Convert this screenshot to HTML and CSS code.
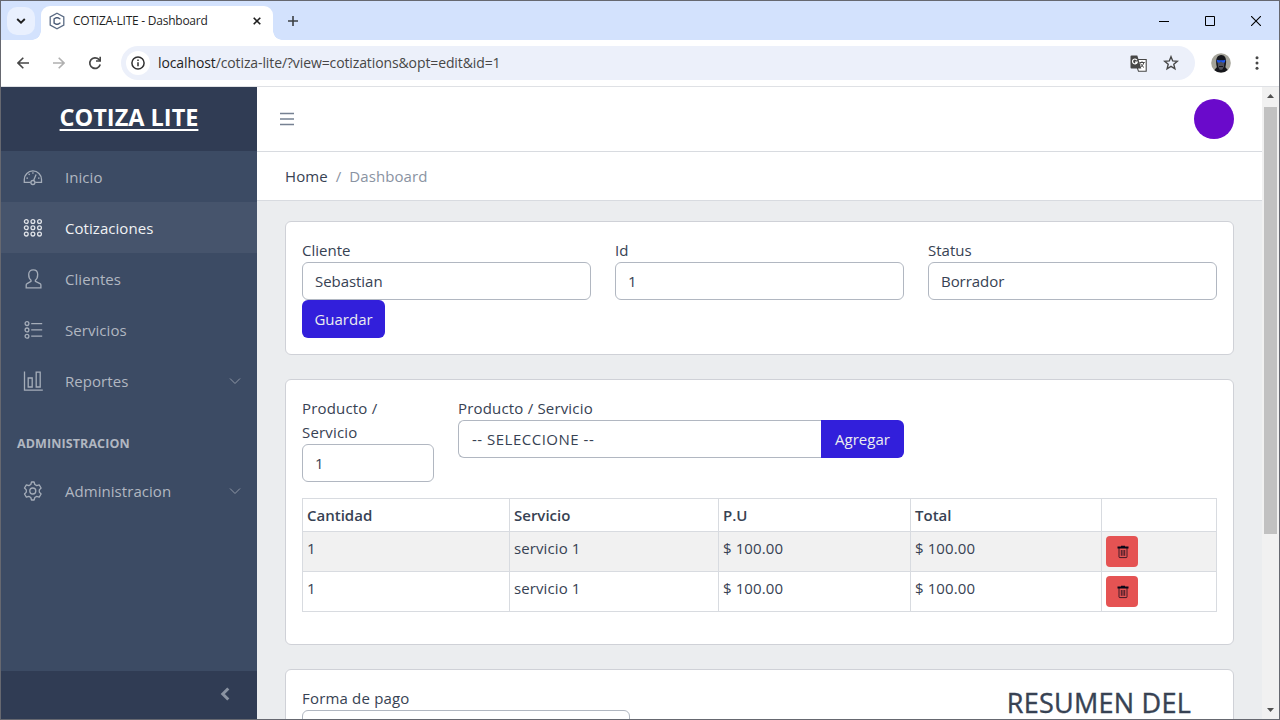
FILE: index.html
```html
<!DOCTYPE html>
<html lang="es">
<head>
<meta charset="utf-8">
<title>COTIZA-LITE - Dashboard</title>
<link rel="stylesheet" href="styles.css">
</head>
<body>
<div class="window">
  <div class="tabstrip">
    <div class="tab-search"><svg width="10" height="6" viewBox="0 0 10 6"><path d="M1.200 1 5 4.600 8.800 1" fill="none" stroke="#1f1f1f" stroke-width="1.900"/></svg></div>
    <div class="tab">
      <svg class="favicon" width="16" height="18" viewBox="0 0 16 18"><path d="M8 1.200 14.800 5v8L8 16.800 1.200 13V5z" fill="none" stroke="#5a6b84" stroke-width="1.300"/><path d="M10.900 7.300V6.900L8.900 5.700H7.200L5.100 6.900v4.200l2.100 1.200h1.700l2-1.200v-.5" fill="none" stroke="#4c5d78" stroke-width="1.400"/></svg>
      <span class="tab-title">COTIZA-LITE - Dashboard</span>
      <svg class="tab-close" width="8" height="8" viewBox="0 0 8 8"><path d="m.7.7 6.600 6.600M7.300.7.7 7.300" stroke="#1f1f1f" stroke-width="1.600"/></svg>
    </div>
    <svg class="new-tab" width="12" height="12" viewBox="0 0 12 12"><path d="M6 1v10M1 6h10" stroke="#3c4043" stroke-width="1.600"/></svg>
    <div class="controls">
      <svg width="10" height="10" viewBox="0 0 10 10"><path d="M0 5.500h10" stroke="#000"/></svg>
      <svg width="10" height="10" viewBox="0 0 10 10"><path d="M.5.5h9v9h-9z" fill="none" stroke="#000"/></svg>
      <svg width="10" height="10" viewBox="0 0 10 10"><path d="m0 0 10 10M10 0 0 10" stroke="#000" stroke-width="1.100"/></svg>
    </div>
  </div>
  <div class="toolbar">
    <svg class="nav-icon" width="12" height="12" viewBox="0 0 12 12"><path d="M12 6H1.200M6.300.8 1 6l5.300 5.200" fill="none" stroke="#474747" stroke-width="1.600"/></svg>
    <svg class="nav-icon" width="12" height="12" viewBox="0 0 12 12"><path d="M0 6h10.800M5.700.8 11 6l-5.300 5.200" fill="none" stroke="#b0b0b0" stroke-width="1.600"/></svg>
    <svg class="nav-icon" width="14" height="14" viewBox="0 0 14 14"><path d="M12.200 8.500A5.300 5.300 0 1 1 10.900 3.400L12.200 4.700" fill="none" stroke="#474747" stroke-width="1.700"/><path d="M13 .8v5H8V4.200h3.400V.8z" fill="#474747"/></svg>
    <div class="omnibox">
      <div class="site-info"><svg width="14" height="14" viewBox="0 0 14 14"><circle cx="7" cy="7" r="6.100" fill="none" stroke="#303030" stroke-width="1.500"/><path d="M6.250 6.200h1.500v4h-1.500zM6.250 3.600h1.500v1.500h-1.500z" fill="#303030"/></svg></div>
      <span class="url"><span class="host">localhost</span>/cotiza-lite/?view=cotizations&amp;opt=edit&amp;id=1</span>
      <svg class="translate" width="17" height="17" viewBox="0 0 17 17"><path d="M7.500 4.500h8.700v11.800H8.500l-1-3z" fill="#fff" stroke="#474747" stroke-width="1.100"/><path d="M1.500.5h5.800l4 13H1.500A1 1 0 0 1 .5 12.500v-11a1 1 0 0 1 1-1z" fill="#474747"/><path d="M7 5.200A2.400 2.400 0 1 0 7.200 7.200H5" fill="none" stroke="#fff" stroke-width="1.200"/><path d="M9.500 7.500h5.200M12 6.300v1.200M13.800 7.700c-.6 2-1.800 3.500-3 4.300M10.500 8.500c.7 1.500 2 3 3.500 4" fill="none" stroke="#474747"/></svg>
      <svg class="star" width="16" height="16" viewBox="0 0 16 16"><path d="m8 1.700 1.700 4.200 4.600.4-3.500 3 1.100 4.500L8 11.400l-3.900 2.400 1.100-4.500-3.500-3 4.600-.4z" fill="none" stroke="#474747" stroke-width="1.400"/></svg>
    </div>
    <svg class="profile" width="20" height="20" viewBox="0 0 20 20"><circle cx="10" cy="10" r="9.800" fill="#a5a49a"/><path d="M3.500 17.200C4.500 15 5.500 15.500 5.800 14 4.600 9 4.500 2.200 10.200 2 15.800 2.200 15.700 9 14.400 14c.6 1.500 1.500 1.500 2.200 3a9.800 9.800 0 0 1-13.100.2z" fill="#15161b"/><path d="M6.500 8.700h7l-.6 5-1.700 3H8.700l-1.600-3z" fill="#50515b"/><path d="M5.700 6.700c3 .8 6 .8 8.800 0l-.7 2.800h-2.500L10 8.500l-1.300 1H6.400z" fill="#1c55ee"/><path d="M8 13.500h4" stroke="#15161b"/></svg>
    <svg class="kebab" width="4" height="14" viewBox="0 0 4 14"><circle cx="2" cy="1.700" r="1.500" fill="#474747"/><circle cx="2" cy="7" r="1.500" fill="#474747"/><circle cx="2" cy="12.300" r="1.500" fill="#474747"/></svg>
  </div>

  <div class="viewport">
    <aside class="sidebar">
      <div class="brand"><a class="brand-name">COTIZA LITE</a></div>
      <nav class="nav">
        <a class="item"><svg class="icon" viewBox="0 0 20 20"><path d="M7.600 15.300H1.300V12.500a8.600 8.600 0 0 1 17.200 0V15.300h-6.300"/><circle cx="9.900" cy="15.500" r="2"/><path d="m10.600 13.400 2.500-6M3.400 11.200h1.600M15 11.200h1.500M5.600 6.800l1.100 1.100M9.900 5.200v1.500"/></svg><span>Inicio</span></a>
        <a class="item active"><svg class="icon" viewBox="0 0 20 20"><circle cx="3.300" cy="3.500" r="1.900"/><circle cx="9.900" cy="3.500" r="1.900"/><circle cx="16.500" cy="3.500" r="1.900"/><circle cx="3.300" cy="9.800" r="1.900"/><circle cx="9.900" cy="9.800" r="1.900"/><circle cx="16.500" cy="9.800" r="1.900"/><circle cx="3.300" cy="16.100" r="1.900"/><circle cx="9.900" cy="16.100" r="1.900"/><circle cx="16.500" cy="16.100" r="1.900"/></svg><span>Cotizaciones</span></a>
        <a class="item"><svg class="icon" viewBox="0 0 20 20"><path d="M8 11.200C6.300 10 5.700 8.200 5.700 5.600c0-3 1.700-4.700 4.500-4.700s4.500 1.700 4.500 4.700c0 2.600-.6 4.400-2.300 5.600v1.200l4.600 2.200c.6.300.9.800.9 1.500v2.800H3.200v-2.800c0-.7.300-1.200.9-1.500L8 12.400z"/></svg><span>Clientes</span></a>
        <a class="item"><svg class="icon" viewBox="0 0 20 20"><circle cx="4" cy="3.600" r="1.900"/><circle cx="4" cy="9.900" r="1.900"/><circle cx="4" cy="16.200" r="1.900"/><path d="M8.200 3.600h11M8.200 9.900h11M8.200 16.200h11"/></svg><span>Servicios</span></a>
        <a class="item"><svg class="icon" viewBox="0 0 20 20"><path d="M1.500.5v18.700h18.300M5.200 7h4v9h-4zM13.200 1.200h4V16h-4z"/></svg><span>Reportes</span><svg class="chevron" viewBox="0 0 12 8"><path d="m1 1.500 5 5 5-5"/></svg></a>
        <div class="nav-title">ADMINISTRACION</div>
        <a class="item"><svg class="icon" viewBox="0 0 20 20"><path d="M8.500 1h2.600l.7 2.500 1.900 1.100 2.500-.7 1.900 3.100-1.800 1.900v2.200l1.800 1.900-1.900 3.100-2.500-.7-1.900 1.100-.7 2.500H8.500l-.7-2.500-1.900-1.100-2.500.7L1.500 13l1.800-1.900V8.900L1.500 7l1.900-3.100 2.500.7 1.900-1.100z" stroke-linejoin="round"/><circle cx="9.800" cy="10" r="3"/></svg><span>Administracion</span><svg class="chevron" viewBox="0 0 12 8"><path d="m1 1.500 5 5 5-5"/></svg></a>
      </nav>
      <div class="toggler"><svg width="10" height="14" viewBox="0 0 10 14"><path d="M8.300 1.500 2.800 7l5.500 5.500" fill="none" stroke="#8a93a2" stroke-width="3"/></svg></div>
    </aside>

    <main class="main">
      <header class="header">
        <svg class="burger" width="14" height="14" viewBox="0 0 14 14"><path d="M0 1.500h14M0 7h14M0 12.500h14"/></svg>
        <div class="avatar"></div>
      </header>
      <div class="breadcrumb"><span>Home</span><span class="muted">/</span><span class="muted">Dashboard</span></div>
      <div class="content">
        <section class="card">
          <div class="row">
            <div class="third"><label>Cliente</label><div class="control">Sebastian</div></div>
            <div class="third"><label>Id</label><div class="control">1</div></div>
            <div class="third"><label>Status</label><div class="control">Borrador</div></div>
          </div>
          <button class="btn" type="button">Guardar</button>
        </section>

        <section class="card">
          <div class="row add-row">
            <div class="qty"><label>Producto /<br>Servicio</label><div class="control">1</div></div>
            <div class="product"><label>Producto / Servicio</label>
              <div class="group"><div class="control select">-- SELECCIONE --</div><button class="btn" type="button">Agregar</button></div>
            </div>
          </div>
          <table class="table">
            <colgroup><col class="c1"><col class="c2"><col class="c3"><col class="c4"><col class="c5"></colgroup>
            <thead><tr><th>Cantidad</th><th>Servicio</th><th>P.U</th><th>Total</th><th></th></tr></thead>
            <tbody>
              <tr class="striped"><td>1</td><td>servicio 1</td><td>$ 100.00</td><td>$ 100.00</td><td><button class="delete" type="button"><svg width="12" height="14" viewBox="0 0 12 14"><path d="M.5 1.500h3.500V.7h4v.8h3.500v2H.5z" fill="#080818"/><path d="M2 3v8.800q0 .8.800.8h6.400q.8 0 .8-.8V3M4.300 5v5.800M6 5v5.800M7.700 5v5.800" fill="none" stroke="#080818" stroke-width=".75"/></svg></button></td></tr>
              <tr><td>1</td><td>servicio 1</td><td>$ 100.00</td><td>$ 100.00</td><td><button class="delete" type="button"><svg width="12" height="14" viewBox="0 0 12 14"><path d="M.5 1.500h3.500V.7h4v.8h3.500v2H.5z" fill="#080818"/><path d="M2 3v8.800q0 .8.800.8h6.400q.8 0 .8-.8V3M4.300 5v5.800M6 5v5.800M7.700 5v5.800" fill="none" stroke="#080818" stroke-width=".75"/></svg></button></td></tr>
            </tbody>
          </table>
        </section>

        <section class="card">
          <div class="row summary">
            <div class="payment"><label>Forma de pago</label><div class="control"></div></div>
            <h3 class="summary-title">RESUMEN DEL</h3>
          </div>
        </section>
      </div>
    </main>

    <div class="scrollbar">
      <svg width="17" height="17" viewBox="0 0 17 17"><path d="M5 11h7L8.500 7z" fill="#505050"/></svg>
      <div class="thumb"></div>
      <svg class="down" width="17" height="17" viewBox="0 0 17 17"><path d="M5 6h7l-3.500 4z" fill="#505050"/></svg>
    </div>
  </div>
</div>
</body>
</html>
```

FILE: styles.css
```css
* { box-sizing: border-box; }
body {
  margin: 0;
  width: 1280px;
  height: 720px;
  overflow: hidden;
  font-family: "Open Sans", "Noto Sans", sans-serif;
  font-size: 15px;
  line-height: 24px;
  color: #374253;
}
svg { display: block; flex: none; }
.window {
  display: flex;
  flex-direction: column;
  height: 720px;
  border: 1px solid #666870;
  background: #fff;
}

/* Browser chrome */
.tabstrip { display: flex; align-items: center; height: 39px; flex: none; background: #d3e2fd; }
.tab-search {
  display: flex; align-items: center; justify-content: center;
  width: 28px; height: 28px; margin-left: 6px;
  border-radius: 10px; background: #e9f0fe;
}
.tab {
  position: relative;
  display: flex; align-items: center; align-self: flex-end;
  width: 232px; height: 34px; margin-left: 6px; padding: 0 12px 4px 8px;
  border-radius: 9px 9px 0 0; background: #fff;
}
.tab::before, .tab::after {
  content: ""; position: absolute; bottom: 0; width: 9px; height: 9px;
}
.tab::before { left: -9px; background: radial-gradient(circle at 0 0, transparent 8.500px, #fff 9px); }
.tab::after { right: -9px; background: radial-gradient(circle at 100% 0, transparent 8.500px, #fff 9px); }
.tab-title { margin-left: 8px; font-size: 12px; letter-spacing: -0.240px; color: #1f1f1f; white-space: nowrap; }
.tab-close { margin-left: auto; }
.new-tab { margin-left: 14px; }
.controls { display: flex; gap: 36px; margin-left: auto; margin-right: 18px; }
.toolbar {
  display: flex; align-items: center; flex: none;
  height: 47px; border-bottom: 1px solid #dfe1e5; background: #fff;
}
.nav-icon { margin-left: 24px; }
.nav-icon:first-child { margin-left: 16px; }
.toolbar .nav-icon:nth-child(3) { margin-left: 23px; }
.omnibox {
  display: flex; align-items: center;
  width: 1074px; height: 34px; margin-left: 19px; padding: 0 16px 0 5px;
  border-radius: 17px; background: #ecf0fa;
}
.site-info {
  display: flex; align-items: center; justify-content: center;
  width: 24px; height: 24px; border-radius: 50%; background: #fff;
}
.url { margin-left: 8px; font-size: 14px; letter-spacing: -0.110px; color: #474747; white-space: nowrap; }
.host { color: #1f1f1f; }
.translate { margin-left: auto; }
.star { margin-left: 16px; }
.profile { margin-left: 16px; }
.kebab { margin-left: 24px; }

/* Page */
.viewport { display: flex; flex: 1; min-height: 0; }
.sidebar { display: flex; flex-direction: column; width: 256px; flex: none; background: #3c4b64; }
.brand { display: flex; justify-content: center; height: 64px; padding-top: 15px; background: #303c54; }
.brand-name {
  font-size: 23.500px; line-height: 30px; font-weight: 700; letter-spacing: 0;
  color: #fff; text-decoration: underline; text-decoration-thickness: 2px; text-underline-offset: 3px;
}
.nav { flex: 1; }
.item { display: flex; align-items: center; height: 51px; padding: 0 16px 0 22px; color: #b1b7c1; letter-spacing: 0.050px; }
.item.active { background: #46546c; color: #f1f2f4; }
.icon { width: 20px; height: 20px; margin-right: 22px; fill: none; stroke: #a5adb9; stroke-width: 1.300; }
.active .icon { stroke: #e0e3e8; }
.chevron { width: 12px; height: 8px; margin-left: auto; fill: none; stroke: #9098a6; stroke-width: 1; }
.nav-title { height: 59px; padding: 26px 16px 0; font-size: 12.500px; font-weight: 700; letter-spacing: 0.100px; color: #b1b7c1; }
.toggler { display: flex; align-items: center; height: 48px; padding: 0 27px 2px; justify-content: flex-end; background: #303c54; }

.main { flex: 1; min-width: 0; background: #ebedef; overflow: hidden; }
.header {
  display: flex; align-items: center; justify-content: space-between;
  height: 65px; padding: 0 28px 0 23px; border-bottom: 1px solid #d8dbe0; background: #fff;
}
.burger { stroke: #768192; stroke-width: 1.300; }
.avatar { width: 40px; height: 40px; border-radius: 50%; background: #6a0acb; }
.breadcrumb {
  display: flex; align-items: center; gap: 8px; letter-spacing: 0.080px;
  height: 49px; padding: 0 28px; border-bottom: 1px solid #d8dbe0; background: #fff;
}
.muted { color: #8a93a2; }
.content { display: flex; flex-direction: column; gap: 24px; padding: 20px 28px; }
.card { padding: 16px; border: 1px solid #cfd1d7; border-radius: 6px; background: #fff; }
.row { display: flex; gap: 24px; }
.third { flex: 1; }
label { display: block; letter-spacing: 0; }
.control {
  height: 38px; padding: 6px 12px; border: 1px solid #b1b7c1; border-radius: 6px;
  background: #fff; letter-spacing: -0.050px;
}
.btn {
  display: block; width: 83px; height: 38px; padding: 0; border: 0; border-radius: 6px;
  background: #321fdb; color: #ebedef; font: inherit;
}
.add-row { margin-bottom: 16px; }
.qty { width: 132px; }
.qty label, .product label, .payment label { letter-spacing: 0.180px; }
.product { width: 446px; }
.group { display: flex; }
.group .control { flex: 1; border-right: 0; border-radius: 6px 0 0 6px; }
.group .select { padding-left: 13px; letter-spacing: 0.500px; }
.group .btn { border-radius: 0 6px 6px 0; }
.table { width: 915px; margin-bottom: 16px; border-collapse: collapse; table-layout: fixed; }
.c1 { width: 207px; }
.c2 { width: 209px; }
.c3 { width: 192px; }
.c4 { width: 191px; }
.c5 { width: 115px; }
.table th, .table td { padding: 4px; border: 1px solid #d8dbe0; text-align: left; vertical-align: top; }
.table th { height: 33px; font-weight: 600; }
.table td { height: 40px; letter-spacing: 0.100px; }
.striped { background: #f1f1f1; }
.delete {
  display: flex; align-items: center; justify-content: center;
  width: 32px; height: 31px; padding: 0 0 0 1px; border: 0; border-radius: 4px; background: #e55353;
}
.payment { width: 328px; }
.summary { justify-content: space-between; }
.summary-title { margin: 0; padding: 2px 26px 0 0; font-size: 27px; line-height: 30px; font-weight: 500; letter-spacing: 0.250px; -webkit-text-stroke: 0.400px #374253; }

.scrollbar { display: flex; flex-direction: column; align-items: center; width: 17px; flex: none; background: #f1f1f1; }
.thumb { width: 13px; height: 427px; margin-top: 3px; background: #c1c1c1; }
.down { margin-top: auto; }
```
